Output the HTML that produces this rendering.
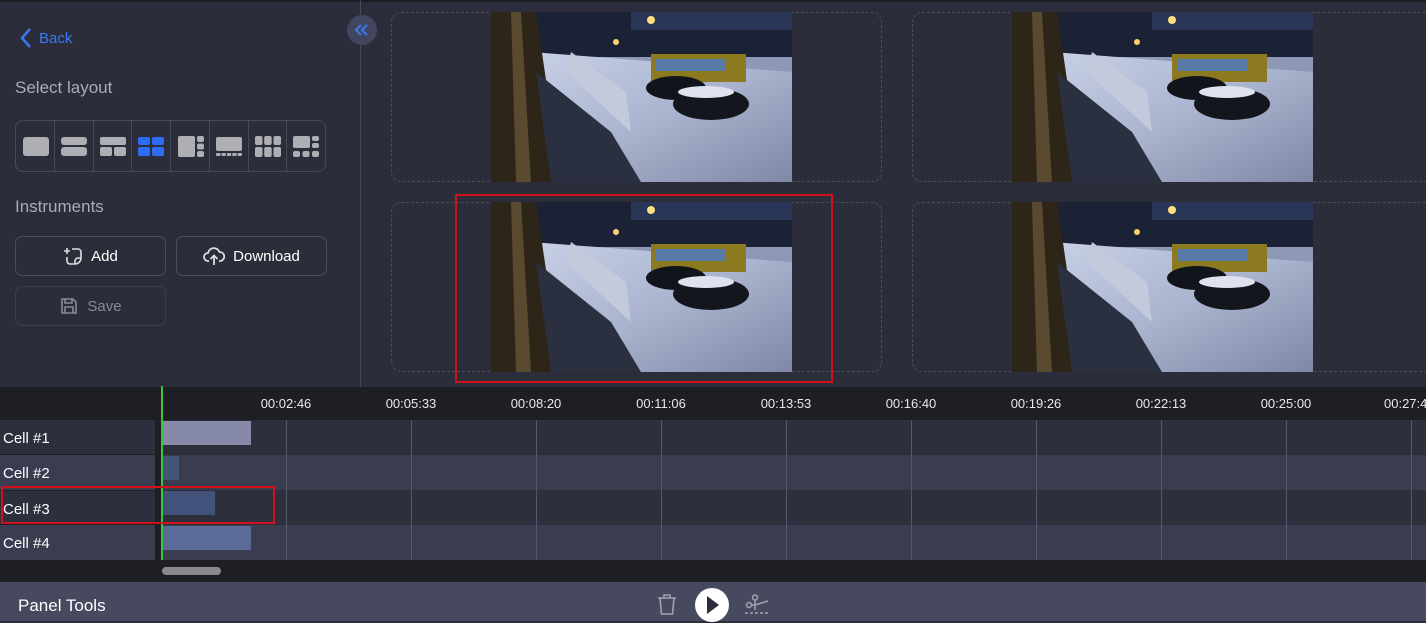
<!DOCTYPE html>
<html><head><meta charset="utf-8"><style>
*{box-sizing:border-box;margin:0;padding:0}
body{width:1426px;height:621px;overflow:hidden;background:#2b2d3a;font-family:"Liberation Sans",sans-serif;position:relative;color:#fff}
.abs{position:absolute}
.side{left:0;top:0;width:361px;height:387px;border-right:1px solid #454857}
.t{color:#a9acb8;font-size:17px}
.lay{left:15px;top:120px;width:311px;height:52px;border:1px solid #474a58;border-radius:8px;display:flex}
.lay div{flex:1;border-right:1px solid #474a58;position:relative}
.lay div:last-child{border:none}
.btn{border:1px solid #4a4d5c;border-radius:7px;height:40px;width:151px;display:flex;align-items:center;justify-content:center;font-size:15px;gap:8px}
.cell{border:1px dashed #4a4d5a;border-radius:10px}
.img{width:301px;height:170px}
.row{left:0;width:1426px;height:35px}
.lbl{left:0;width:155px;height:35px;font-size:15px;padding:10px 0 0 3px}
.tick{top:396px;font-size:13px;color:#e8e8ee;width:80px;text-align:center}
.gl{top:420px;width:1px;height:140px;background:#55586a}
</style></head><body>
<svg width="0" height="0" style="position:absolute"><defs>
<linearGradient id="sn" x1="0" y1="0" x2="1" y2="1"><stop offset="0" stop-color="#c8d0e6"/><stop offset=".5" stop-color="#aab4cf"/><stop offset="1" stop-color="#7f88a4"/></linearGradient>
<g id="scene">
<rect width="301" height="170" fill="#8e98b6"/>
<rect width="301" height="45" fill="#1b2236"/>
<rect x="140" y="0" width="161" height="18" fill="#2a3658"/>
<polygon points="40,40 301,60 301,170 100,170 40,70" fill="url(#sn)"/>
<rect x="160" y="42" width="95" height="28" fill="#8c7a20"/>
<rect x="165" y="47" width="70" height="12" fill="#5a7aa8"/>
<ellipse cx="185" cy="76" rx="30" ry="12" fill="#12141c"/>
<ellipse cx="220" cy="92" rx="38" ry="16" fill="#14161e"/>
<ellipse cx="215" cy="80" rx="28" ry="6" fill="#dde2ee"/>
<polygon points="0,0 45,0 70,170 0,170" fill="#2d2618"/>
<polygon points="20,0 30,0 40,170 25,170" fill="#5a4a30"/>
<polygon points="45,60 120,120 150,170 60,170" fill="#2a3040"/>
<polygon points="80,40 135,80 140,120 75,60" fill="#c4cadb"/>
<circle cx="160" cy="8" r="4" fill="#ffe080"/><circle cx="125" cy="30" r="3" fill="#ffd070"/>
</g></defs></svg>
<div class="abs" style="left:0;top:0;width:1426px;height:2px;background:#1d1e24"></div>
<div class="abs side"></div>
<div class="abs" style="left:19px;top:27px;display:flex;align-items:center;gap:6px;color:#3a78f0;font-size:15px">
<svg width="14" height="22" viewBox="0 0 14 22"><path d="M11 2 L3 11 L11 20" stroke="#3a78f0" stroke-width="2.5" fill="none"/></svg>Back</div>
<div class="abs" style="left:347px;top:15px;width:30px;height:30px;border-radius:50%;background:#414560"><svg width="30" height="30" viewBox="0 0 30 30" fill="none" stroke="#3a78f0" stroke-width="2"><path d="M14 10l-5 5 5 5M20 10l-5 5 5 5"/></svg></div>
<div class="abs t" style="left:15px;top:78px">Select layout</div>
<div class="abs lay">
<div><svg class="abs" style="left:7px;top:16px" width="26" height="19"><rect width="26" height="19" rx="3" fill="#aeafb5"/></svg></div>
<div><svg class="abs" style="left:6px;top:16px" width="26" height="19"><rect width="26" height="8" rx="3" fill="#aeafb5"/><rect y="10" width="26" height="9" rx="3" fill="#aeafb5"/></svg></div>
<div><svg class="abs" style="left:6px;top:16px" width="26" height="19"><rect width="26" height="8" rx="2" fill="#aeafb5"/><rect y="10" width="12" height="9" rx="2" fill="#aeafb5"/><rect x="14" y="10" width="12" height="9" rx="2" fill="#aeafb5"/></svg></div>
<div><svg class="abs" style="left:6px;top:16px" width="26" height="19"><rect width="12" height="8" rx="2" fill="#2f6cf5"/><rect x="14" width="12" height="8" rx="2" fill="#2f6cf5"/><rect y="10" width="12" height="9" rx="2" fill="#2f6cf5"/><rect x="14" y="10" width="12" height="9" rx="2" fill="#2f6cf5"/></svg></div>
<div><svg class="abs" style="left:7px;top:15px" width="26" height="21"><rect width="17" height="21" rx="2" fill="#aeafb5"/><rect x="19" width="7" height="6" rx="2" fill="#aeafb5"/><rect x="19" y="7.5" width="7" height="6" rx="2" fill="#aeafb5"/><rect x="19" y="15" width="7" height="6" rx="2" fill="#aeafb5"/></svg></div>
<div><svg class="abs" style="left:6px;top:16px" width="26" height="20"><rect width="26" height="14" rx="2" fill="#aeafb5"/><g fill="#aeafb5"><rect y="16" width="4.5" height="3" rx="1"/><rect x="5.4" y="16" width="4.5" height="3" rx="1"/><rect x="10.8" y="16" width="4.5" height="3" rx="1"/><rect x="16.2" y="16" width="4.5" height="3" rx="1"/><rect x="21.5" y="16" width="4.5" height="3" rx="1"/></g></svg></div>
<div><svg class="abs" style="left:6px;top:15px" width="26" height="21" fill="#aeafb5"><rect width="7.5" height="9" rx="2"/><rect x="9.2" width="7.5" height="9" rx="2"/><rect x="18.5" width="7.5" height="9" rx="2"/><rect y="11" width="7.5" height="10" rx="2"/><rect x="9.2" y="11" width="7.5" height="10" rx="2"/><rect x="18.5" y="11" width="7.5" height="10" rx="2"/></svg></div>
<div><svg class="abs" style="left:6px;top:15px" width="26" height="21" fill="#aeafb5"><rect width="17" height="12" rx="2"/><rect x="19" width="7" height="5" rx="2"/><rect x="19" y="7" width="7" height="5" rx="2"/><rect y="15" width="7" height="6" rx="2"/><rect x="9.5" y="15" width="7" height="6" rx="2"/><rect x="19" y="15" width="7" height="6" rx="2"/></svg></div>
</div>
<div class="abs t" style="left:15px;top:197px">Instruments</div>
<div class="abs btn" style="left:15px;top:236px"><svg width="20" height="20" viewBox="0 0 20 20" fill="none" stroke="#ddd" stroke-width="1.6"><path d="M4 2v6M1 5h6M9 3h6a3 3 0 0 1 3 3v6a6 6 0 0 1-6 6H7a3 3 0 0 1-3-3v-4"/><path d="M12 18v-3a3 3 0 0 1 3-3h3"/></svg>Add</div>
<div class="abs btn" style="left:176px;top:236px"><svg width="22" height="20" viewBox="0 0 22 20" fill="none" stroke="#ddd" stroke-width="1.8"><path d="M6 15H5a4 4 0 0 1 0-8 6 6 0 0 1 11.5-1A4.5 4.5 0 0 1 17 15h-1"/><path d="M11 19V10M7.5 13l3.5-3.5 3.5 3.5"/></svg>Download</div>
<div class="abs btn" style="left:15px;top:286px;color:#888a94;border-color:#3c3f4c"><svg width="20" height="20" viewBox="0 0 20 20" fill="none" stroke="#888a94" stroke-width="1.6"><path d="M3 3h11l3 3v11H3z"/><path d="M6 3v4h7V3M6 17v-6h8v6"/></svg>Save</div>

<div class="abs cell" style="left:391px;top:12px;width:491px;height:170px"></div>
<div class="abs cell" style="left:912px;top:12px;width:530px;height:170px"></div>
<div class="abs cell" style="left:391px;top:202px;width:491px;height:170px"></div>
<div class="abs cell" style="left:912px;top:202px;width:530px;height:170px"></div>
<svg class="abs img" style="left:491px;top:12px"><use href="#scene"/></svg>
<svg class="abs img" style="left:1012px;top:12px"><use href="#scene"/></svg>
<svg class="abs img" style="left:491px;top:202px"><use href="#scene"/></svg>
<svg class="abs img" style="left:1012px;top:202px"><use href="#scene"/></svg>
<div class="abs" style="left:455px;top:194px;width:378px;height:189px;border:2px solid #d0101a"></div>

<div class="abs" style="left:0;top:387px;width:1426px;height:33px;background:#1e1f25"></div>
<div class="abs row" style="top:420px;background:#2d2f3c"></div>
<div class="abs row" style="top:455px;background:#3a3d50"></div>
<div class="abs row" style="top:490px;background:#2d2f3c"></div>
<div class="abs row" style="top:525px;background:#3a3d50"></div>
<div class="abs" style="left:155px;top:420px;width:7px;height:140px;background:#1e1f25"></div>
<div class="abs lbl" style="top:420px;border-bottom:1px solid #1e1f25">Cell #1</div>
<div class="abs lbl" style="top:455px">Cell #2</div>
<div class="abs lbl" style="top:490px;border-top:1px solid #1e1f25;border-bottom:1px solid #1e1f25">Cell #3</div>
<div class="abs lbl" style="top:525px">Cell #4</div>
<div class="abs gl" style="left:286px"></div><div class="abs gl" style="left:411px"></div><div class="abs gl" style="left:536px"></div><div class="abs gl" style="left:661px"></div><div class="abs gl" style="left:786px"></div><div class="abs gl" style="left:911px"></div><div class="abs gl" style="left:1036px"></div><div class="abs gl" style="left:1161px"></div><div class="abs gl" style="left:1286px"></div><div class="abs gl" style="left:1411px"></div>
<div class="abs tick" style="left:246px">00:02:46</div><div class="abs tick" style="left:371px">00:05:33</div><div class="abs tick" style="left:496px">00:08:20</div><div class="abs tick" style="left:621px">00:11:06</div><div class="abs tick" style="left:746px">00:13:53</div><div class="abs tick" style="left:871px">00:16:40</div><div class="abs tick" style="left:996px">00:19:26</div><div class="abs tick" style="left:1121px">00:22:13</div><div class="abs tick" style="left:1246px">00:25:00</div><div class="abs tick" style="left:1371px;text-align:left;padding-left:13px">00:27:4</div>
<div class="abs" style="left:163px;top:421px;width:88px;height:24px;background:#8789a8"></div>
<div class="abs" style="left:163px;top:456px;width:16px;height:24px;background:#45557a"></div>
<div class="abs" style="left:163px;top:491px;width:52px;height:24px;background:#43527a"></div>
<div class="abs" style="left:163px;top:526px;width:88px;height:24px;background:#5b6b98"></div>
<div class="abs" style="left:161px;top:386px;width:2px;height:175px;background:#3cc43c"></div>
<div class="abs" style="left:1px;top:486px;width:274px;height:38px;border:2px solid #d0101a"></div>
<div class="abs" style="left:0;top:560px;width:1426px;height:22px;background:#1e1f25"></div>
<div class="abs" style="left:162px;top:567px;width:59px;height:8px;border-radius:4px;background:#8a8a8e"></div>
<div class="abs" style="left:0;top:582px;width:1426px;height:39px;background:#474a5e"></div>
<div class="abs" style="left:18px;top:596px;font-size:17px">Panel Tools</div>
<svg class="abs" style="left:656px;top:593px" width="22" height="24" viewBox="0 0 22 24" fill="none" stroke="#a0a2ae" stroke-width="1.6"><path d="M2 5h18M8 5V2h6v3M4 5l1.5 16h11L18 5"/></svg>
<svg class="abs" style="left:694px;top:587px" width="36" height="36" viewBox="0 0 36 36"><circle cx="18" cy="18" r="17" fill="#fff"/><path d="M13 9l12 9-12 9z" fill="#2b2d3a"/></svg>
<svg class="abs" style="left:745px;top:594px" width="25" height="22" viewBox="0 0 25 22" fill="none" stroke="#a0a2ae" stroke-width="1.5"><circle cx="10" cy="3.5" r="2.5"/><circle cx="4" cy="11" r="2.5"/><path d="M10 6v10M6 11h4l13-4"/><path d="M0 19h25" stroke-dasharray="3 2"/></svg>
</body></html>
